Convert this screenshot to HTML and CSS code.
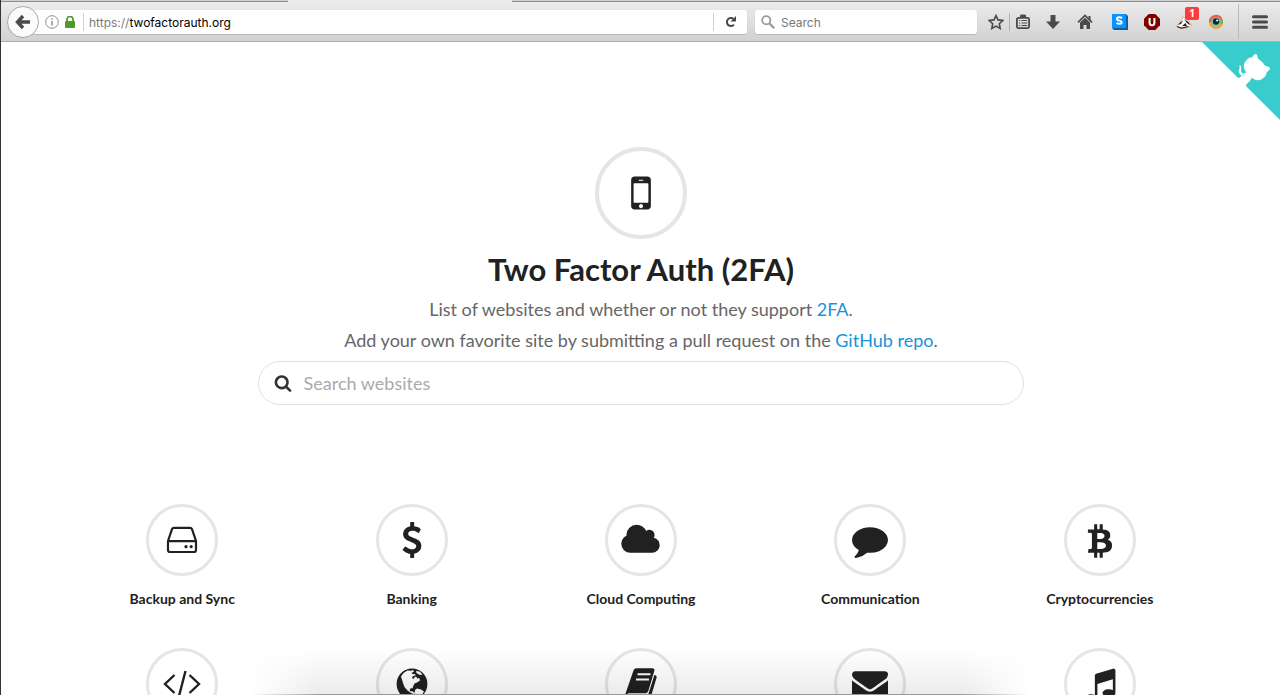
FILE: index.html
```html
<!DOCTYPE html>
<html lang="en">
<head>
<meta charset="utf-8">
<title>Two Factor Auth (2FA)</title>
<link rel="stylesheet" href="styles.css">
</head>
<body>
<div class="browser">
  <div class="tabs"><span class="tab-active"></span></div>
  <div class="toolbar">
    <div class="address">
      <button class="back" aria-label="Back"><svg width="16" height="16" viewBox="0 0 16 16"><path d="M8 2 2.500 8 8 14M3 8h12" fill="none" stroke="#4b4b4b" stroke-width="3.400"/></svg></button>
      <svg class="info" width="14" height="14" viewBox="0 0 14 14"><circle cx="7" cy="7" r="6.300" fill="none" stroke="#909090"/><path d="M7 6v4.600M7 3.200v1.500" stroke="#909090" stroke-width="1.500"/></svg>
      <svg class="lock" width="10" height="12" viewBox="0 0 10 12"><path d="M2 6V3.500a3 3 0 0 1 6 0V6" fill="none" stroke="#4d9a27" stroke-width="1.700"/><rect y="5" width="10" height="7" rx="1" fill="#4d9a27"/></svg>
      <label class="url"><span class="scheme">https://</span><input aria-label="Address" value="twofactorauth.org"></label>
      <button class="reload" aria-label="Reload"><svg width="12" height="12" viewBox="0 0 12 12"><path d="M8.500 3A4 4 0 1 0 9 8.600" fill="none" stroke="#4a4a4a" stroke-width="2"/><path d="M11 0v5.500H5.500z" fill="#4a4a4a"/></svg></button>
    </div>
    <label class="find"><svg width="14" height="14" viewBox="0 0 14 14"><circle cx="5.300" cy="5.300" r="4.100" fill="none" stroke="#999" stroke-width="1.800"/><path d="m8.500 8.500 4.700 4.700" stroke="#999" stroke-width="2.200"/></svg><input aria-label="Search the web" placeholder="Search"></label>
    <div class="actions">
      <button aria-label="Bookmark"><svg width="16" height="16" viewBox="0 0 16 16"><path d="m8 1.600 2 4.300 4.700.6-3.400 3.200.9 4.700L8 12.100l-4.200 2.300.9-4.700L1.300 6.500 6 5.900z" fill="none" stroke="#4a4a4a" stroke-width="1.600"/></svg></button>
      <button class="split" aria-label="Bookmarks list"><svg width="16" height="16" viewBox="0 0 16 16"><rect x="1.900" y="3.900" width="12.200" height="10.200" rx="1.500" fill="none" stroke="#4a4a4a" stroke-width="1.800"/><path d="M5 3V1.800A1.500 1.500 0 0 1 6.500.5h3A1.500 1.500 0 0 1 11 1.800V3z" fill="#4a4a4a"/><path d="M4 6.500h1.200M6.500 6.500h5.700M4 9h1.200M6.500 9h5.700M4 11.500h1.200M6.500 11.500h5.700" stroke="#4a4a4a" stroke-width="1.100"/></svg></button>
      <button aria-label="Downloads"><svg width="16" height="16" viewBox="0 0 16 16"><path d="M5.500 1h5v6.500H15L8 15 1 7.500h4.500z" fill="#4a4a4a"/></svg></button>
      <button aria-label="Home"><svg width="16" height="16" viewBox="0 0 16 16"><path d="M1 8.300 8 1.500l7 6.800" fill="none" stroke="#4a4a4a" stroke-width="1.700"/><path d="M11.500 2h2v4l-2-2zM3 8.600l5-4.800 5 4.800V15H9.500v-4h-3v4H3z" fill="#4a4a4a"/></svg></button>
      <button aria-label="Stylish"><svg width="16" height="16" viewBox="0 0 16 16"><path d="M0 0h14l2 2v14H2l-2-2z" fill="#0861a4"/><path d="M0 0h14v14H0z" fill="#0a93fb"/><path d="M10 4.100C8.300 3 5 2.900 5 4.900c0 2.300 4.700 1.200 4.700 3.300 0 2-3.300 2-5.200.8" fill="none" stroke="#fff" stroke-width="2"/></svg></button>
      <button aria-label="uBlock"><svg width="16" height="16" viewBox="0 0 16 16"><path d="M4.700 0h6.600L16 4.700v6.600L11.300 16H4.700L0 11.300V4.700z" fill="#800000"/><path d="M5.600 4v4.700q0 2.500 2.400 2.500t2.400-2.500V4" fill="none" stroke="#fff" stroke-width="2"/></svg></button>
      <button class="badged" aria-label="Privacy Badger"><svg width="17" height="16" viewBox="0 0 17 16"><path d="M.8 12.500 3 8.500 6.500 5 7 2.500l2 2L13 7l3 4.500-3 1.500-7 1.500z" fill="#fff" stroke="#e8a873" stroke-width=".8"/><path d="m2 11 2.500-3L7 6.500 5 10zM8 5.500l4 2 3 4-3.500-2zM6 12l3.500-3 1.500 3z" fill="#222"/><path d="m1 12.500 4.500 1.600 7-1.600" fill="none" stroke="#222" stroke-width="1.200"/></svg><span class="badge">1</span></button>
      <button class="eye" aria-label="Eye extension"><svg width="16" height="16" viewBox="0 0 16 16"><circle cx="8" cy="8" r="6" fill="#7cc8a2" stroke="#f2a33b" stroke-width="2.200"/><path d="M2 8A6 6 0 0 1 13 4.600" fill="none" stroke="#e95d50" stroke-width="2.200"/><path d="M13 4.600A6 6 0 0 1 13.500 10" fill="none" stroke="#65b55c" stroke-width="2.200"/><circle cx="8" cy="7.500" r="3.200" fill="#102a38"/><circle cx="9.200" cy="6.500" r="1.100" fill="#fff"/></svg></button>
      <button class="menu" aria-label="Menu"><svg width="16" height="14" viewBox="0 0 16 14"><path d="M1.500 1.800h13M1.500 7h13M1.500 12.200h13" stroke="#4a4a4a" stroke-width="3" stroke-linecap="round"/></svg></button>
    </div>
  </div>
</div>

<main class="page">
  <a class="corner" href="#" aria-label="View source on GitHub"><svg width="80" height="80" viewBox="0 0 250 250"><path d="M0,0 L115,115 L130,115 L142,142 L250,250 L250,0 Z" fill="#39cccc"/><path d="M128.3,109.0 C113.8,99.7 119.0,89.6 119.0,89.6 C122.0,82.7 120.5,78.6 120.5,78.6 C119.2,72.0 123.4,76.3 123.4,76.3 C127.3,80.9 125.5,87.3 125.5,87.3 C122.9,97.6 130.6,101.9 134.4,103.2" fill="#fff"/><path d="M115.0,115.0 C114.9,115.1 118.7,116.5 119.8,115.4 L133.7,101.6 C136.9,99.2 139.9,98.4 142.2,98.6 C133.8,88.0 127.5,74.4 143.8,58.0 C148.5,53.4 154.0,51.2 159.7,51.0 C160.3,49.4 163.2,43.6 171.4,40.1 C171.4,40.1 176.1,42.5 178.8,56.2 C183.1,58.6 187.2,61.8 190.9,65.4 C194.5,69.0 197.7,73.2 200.1,77.6 C213.8,80.2 216.3,84.9 216.3,84.9 C212.7,93.1 206.9,96.0 205.4,96.6 C205.1,102.4 203.0,107.8 198.3,112.5 C181.9,128.9 168.3,122.5 157.7,114.1 C157.9,116.9 156.7,120.9 152.7,124.9 L141.0,136.5 C139.8,137.7 141.6,141.9 141.8,141.8 Z" fill="#fff"/></svg></a>

  <header class="hero">
    <div class="ring ring-large"><svg width="46" height="46" viewBox="0 0 1792 1792"><path d="M976 1408q0-33-23.500-56.500t-56.500-23.500-56.500 23.500-23.500 56.500 23.500 56.500 56.500 23.500 56.500-23.500 23.500-56.500zm208-160v-704q0-13-9.500-22.500t-22.500-9.500h-512q-13 0-22.500 9.500t-9.500 22.500v704q0 13 9.500 22.500t22.500 9.500h512q13 0 22.500-9.500t9.500-22.500zm-192-848q0-16-16-16h-160q-16 0-16 16t16 16h160q16 0 16-16zm288-16v1024q0 52-38 90t-90 38h-512q-52 0-90-38t-38-90v-1024q0-52 38-90t90-38h512q52 0 90 38t38 90z"/></svg></div>
    <h1>Two Factor Auth (2FA)</h1>
    <p>List of websites and whether or not they support <a href="#">2FA</a>.</p>
    <p>Add your own favorite site by submitting a pull request on the <a href="#">GitHub repo</a>.</p>
    <label class="search"><svg width="18" height="18" viewBox="0 0 1792 1792"><path d="M1216 832q0-185-131.500-316.500t-316.500-131.500-316.500 131.500-131.500 316.500 131.500 316.500 316.500 131.500 316.500-131.500 131.500-316.500zm512 832q0 52-38 90t-90 38q-54 0-90-38l-343-342q-179 124-399 124-143 0-273.500-55.500t-225-150-150-225-55.500-273.500 55.500-273.500 150-225 225-150 273.500-55.500 273.500 55.500 225 150 150 225 55.500 273.500q0 220-124 399l343 343q37 37 37 90z"/></svg><input aria-label="Search websites" placeholder="Search websites"></label>
  </header>

  <nav class="categories">
    <a class="category" href="#"><span class="ring"><svg width="36" height="36" viewBox="0 0 36 36"><path d="M4 19 8 7.200q.5-1.400 2-1.400h16q1.500 0 2 1.400L32 19v9q0 2-2 2H6q-2 0-2-2zM4.500 19.200h27" fill="none" stroke="#212121" stroke-width="2.200"/><circle cx="22" cy="24.700" r="1.600"/><circle cx="27.200" cy="24.700" r="1.600"/></svg></span>Backup and Sync</a>
    <a class="category" href="#"><span class="ring"><svg width="36" height="36" viewBox="0 0 1792 1792"><path d="M1362 1185q0 153-99.500 263.500t-258.500 136.500v175q0 14-9 23t-23 9h-135q-13 0-22.500-9.500t-9.500-22.500v-175q-66-9-127.500-31t-101.500-44.500-74-48-46.500-37.500-17.500-18q-17-21-2-41l103-135q7-10 23-12 15-2 24 9l2 2q113 99 243 125 37 8 74 8 81 0 142.500-43t61.500-122q0-28-15-53t-33.500-42-58.500-37.500-66-32-80-32.500q-39-16-61.500-25t-61.500-26.500-62.500-31-56.500-35.500-53.500-42.500-43.500-49-35.500-58-21-66.500-8.500-78q0-138 98-242t255-134v-180q0-13 9.500-22.500t22.500-9.500h135q14 0 23 9t9 23v176q57 6 110.500 23t87 33.500 63.500 37.500 39 29 15 14q17 18 5 38l-81 146q-8 15-23 16-14 3-27-7-3-3-14.500-12t-39-26.500-58.500-32-74.500-26-85.500-11.500q-95 0-155 43t-60 111q0 26 8.500 48t29.500 41.500 39.500 33 56 31 60.500 27 70 27.500q53 20 81 31.500t76 35 75.500 42.500 62 50 53 63.500 31.500 76.500 13 94z"/></svg></span>Banking</a>
    <a class="category" href="#"><span class="ring"><svg width="41" height="36" viewBox="0 0 2048 1792"><path d="M1984 1152q0 159-112.500 271.500t-271.500 112.500h-1088q-185 0-316.500-131.500t-131.500-316.500q0-132 71-241.500t187-163.500q-2-28-2-43 0-212 150-362t362-150q158 0 286.500 88t187.500 230q70-62 166-62 106 0 181 75t75 181q0 75-41 138 129 30 213 134.500t84 239.500z"/></svg></span>Cloud Computing</a>
    <a class="category" href="#"><span class="ring"><svg width="36" height="36" viewBox="0 0 1792 1792"><path d="M1792 896q0 174-120 321.500t-326 233-450 85.500q-70 0-145-8-198 175-460 242-49 14-114 22-17 2-30.500-9t-17.500-29v-1q-3-4-.5-12t2-10 4.500-9.500l6-9 7-8.500 8-9q7-8 31-34.500t34.500-38 31-39.500 32.500-51 27-59 26-76q-157-89-247.500-220t-90.500-281q0-130 71-248.500t191-204.500 286-136.500 348-50.500 348 50.500 286 136.500 191 204.500 71 248.500z"/></svg></span>Communication</a>
    <a class="category" href="#"><span class="ring"><svg width="36" height="36" viewBox="-188 84 1792 1792"><path d="M1217 713q18 182-131 258 117 28 175 103t45 214q-7 71-32.500 125t-64.500 89-97 58.500-121.500 34.500-145.500 15v255h-154v-251q-80 0-122-1v252h-154v-255q-18 0-54-.5t-55-.5h-200l31-183h111q50 0 58-51v-402h16q-6-1-16-1v-287q-13-68-89-68h-111v-164l212 1q64 0 97-1v-252h154v247q82-2 122-2v-245h154v252q79 7 140 22.500t113 45 82.500 78 36.500 114.500zm-215 545q0-36-15-64t-37-46-57.500-30.500-65.500-18.500-74-9-69-3-64.500 1-47.500 1v338q8 0 37 .5t48 .5 53-1.500 58.500-4 57-8.500 55.500-14 47.500-21 39.500-30 24.500-40 9.500-51zm-71-476q0-33-12.500-58.500t-30.500-42-48-28-55-16.500-61.500-8-58-2.500-54 1-39.500.5v307q5 0 34.500.5t46.500 0 50-2 55-5.500 51.500-11 48.500-18.500 37-27 27-38.500 9-51z"/></svg></span>Cryptocurrencies</a>
    <a class="category" href="#" aria-label="Developer"><span class="ring"><svg width="38" height="36" viewBox="0 0 38 36"><path d="m11.500 9-9.500 9 9.500 9M26.500 9l9.500 9-9.500 9M22.500 5l-7 27" fill="none" stroke="#212121" stroke-width="2.400"/></svg></span></a>
    <a class="category" href="#" aria-label="Domains"><span class="ring"><svg width="36" height="36" viewBox="0 0 36 36"><circle cx="18" cy="18" r="15.400"/><path d="M7 10.500 9.500 7l4-2.500 3.500.3 2-.8 1 1.500-2.500 1.500 1.500 1.200 2-.2.500 1.500-2.500.5-1 2 1.800 1 1.200-2.500 1.500.5.800 1.500 2-.5.700 2.500-3 2-2.500 1-1.500 3-.5 2-1.500-.5-1.500 2 1 1.500 2-.5.500 1 1.500.5.500 2-4-1.500-3.500-2.500-3-3.500-1.500-4zM21 24l2-1.500 4 1 3 2-1.500 2.500-4 3-2-.3-1.800-3.700z" fill="#fff"/><path d="m22 5 3.500.5 3 3-2.500.5L22.500 7z" fill="#fff"/></svg></span></a>
    <a class="category" href="#" aria-label="Education"><span class="ring"><svg width="36" height="36" viewBox="0 0 36 36"><path d="M10.500 4.500q.7-2.200 3-2.200h16q2.600 0 1.800 2.700l-6 20q-.7 2.200-3 2.200H6q-2 0-2 2 0 1.500 2 1.500h18.500l7-22 1.500 1q1 .7.500 2.200l-6 20q-.7 2-3 2H5.500Q2 34 2 29z"/><path d="M14.500 8.300h13M13 13.500h13" stroke="#fff" stroke-width="2"/></svg></span></a>
    <a class="category" href="#" aria-label="Email"><span class="ring"><svg width="36" height="36" viewBox="0 0 1792 1792"><path d="M1792 710v794q0 66-47 113t-113 47h-1472q-66 0-113-47t-47-113v-794q44 49 101 87 362 246 497 345 57 42 92.500 65.500t94.500 48 110 24.500h2q51 0 110-24.500t94.500-48 92.500-65.500q170-123 498-345 57-39 100-87zm0-294q0 79-49 151t-122 123q-376 261-468 325-10 7-42.500 31t-54 38.500-52 32.500-57.500 27-50 9h-2q-23 0-50-9t-57.500-27-52-32.500-54-38.500-42.500-31q-91-64-262-182.500t-205-142.500q-62-42-117-115.500t-55-136.500q0-78 41.500-130t118.500-52h1472q65 0 112.500 47t47.500 113z"/></svg></span></a>
    <a class="category" href="#" aria-label="Entertainment"><span class="ring"><svg width="36" height="36" viewBox="0 0 1792 1792"><path d="M1664 224v1120q0 50-34 89t-86 60.500-103.500 32-96.500 10.500-96.500-10.500-103.500-32-86-60.500-34-89 34-89 86-60.500 103.500-32 96.500-10.500q105 0 192 39v-537l-768 237v709q0 50-34 89t-86 60.500-103.500 32-96.500 10.500-96.500-10.500-103.500-32-86-60.500-34-89 34-89 86-60.500 103.500-32 96.500-10.500q105 0 192 39v-967q0-31 19-56.500t49-35.500l832-256q12-4 28-4 40 0 68 28t28 68z"/></svg></span></a>
  </nav>
  <div class="shade"></div>
</main>
</body>
</html>
```
FILE: styles.css
```css
* { box-sizing: border-box; }
body {
  margin: 0;
  height: 100vh;
  overflow: hidden;
  display: flex;
  flex-direction: column;
  border-left: 1px solid #333;
  background: #fff;
  color: #212121;
  font-family: Lato, sans-serif;
}
button { border: 0; padding: 0; background: none; display: flex; align-items: center; justify-content: center; }
input { border: 0; padding: 0; outline: 0; background: none; min-width: 0; }
svg { display: block; flex: none; }
a { color: #1593dc; text-decoration: none; }

.browser { flex: none; font-family: Inter, sans-serif; border-bottom: 1px solid #adadad; }
.tabs { height: 2px; background: #cfcfcf; border-bottom: 1px solid #8c8c8c; display: flex; }
.tab-active { width: 224px; margin-left: 287px; height: 2px; background: #ececec; }
.toolbar {
  height: 39px;
  display: flex;
  align-items: center;
  padding-left: 6px;
  background: linear-gradient(#ebebeb, #d2d2d2);
}
.address {
  flex: 1;
  height: 24px;
  display: flex;
  align-items: center;
  background: #fff;
  border-radius: 16px 3px 3px 16px;
  box-shadow: 0 1px 1px #bbb;
}
.back { width: 32px; height: 32px; border: 1px solid #a8a8a8; border-radius: 50%; background: #fbfbfb; flex: none; }
.info { margin-left: 6px; }
.lock { margin: 0 8px 0 6px; }
.url {
  flex: 1;
  height: 18px;
  display: flex;
  align-items: center;
  padding: 2px 0 0 5px;
  border-left: 1px solid #d0d0d0;
  border-right: 1px solid #d0d0d0;
  font-size: 12px;
}
.url input { flex: 1; font: inherit; color: #000; }
.scheme { color: #7b7b7b; }
.reload { width: 33px; height: 24px; }
.find {
  width: 222px;
  height: 24px;
  margin-left: 8px;
  padding-left: 6px;
  display: flex;
  align-items: center;
  gap: 6px;
  background: #fff;
  border-radius: 3px;
  box-shadow: 0 1px 1px #bbb;
}
.find input { flex: 1; padding-top: 2px; font: 12px Inter, sans-serif; }
.find input::placeholder { color: #777; opacity: 1; }
.actions { display: flex; align-items: center; gap: 16px; margin-left: 11px; }
.split { position: relative; margin-left: -5px; }
.split::before { content: ""; position: absolute; left: -6px; height: 18px; border-left: 1px solid #b0b0b0; }
.split + button { margin-left: -2px; }
.split ~ button:nth-of-type(5) { margin-left: 3px; }
.badged { position: relative; }
.badge {
  position: absolute;
  left: 9px;
  top: -7px;
  width: 14px;
  height: 13px;
  border-radius: 2px;
  background: #fb3c3c;
  color: #fff;
  font: bold 10px/13px "Open Sans", sans-serif;
}
.eye { margin-left: -1px; }
.menu { width: 42px; height: 35px; margin-left: -2px; border-left: 1px solid #bababa; }

.page { position: relative; flex: 1; min-height: 0; overflow: hidden; padding-left: 1px; }
.corner { position: absolute; top: -1px; right: -1px; }
.hero {
  width: 60%;
  margin: 0 auto;
  padding-top: 105px;
  display: flex;
  flex-direction: column;
  align-items: center;
}
.ring {
  width: 72px;
  height: 72px;
  border: 3px solid #e5e5e5;
  border-radius: 50%;
  background: #fff;
  display: flex;
  align-items: center;
  justify-content: center;
  fill: #212121;
}
.ring-large { width: 92px; height: 92px; border-width: 4px; }
h1 { margin: 9px 0 4px; font-size: 31px; line-height: 42px; font-weight: 700; white-space: nowrap; }
.hero p { margin: 0; font-size: 18px; line-height: 31px; color: #666; white-space: nowrap; }
.search {
  width: 100%;
  height: 44px;
  margin-top: 5px;
  padding-left: 15px;
  display: flex;
  align-items: center;
  gap: 12px;
  border: 1px solid #dfdfdf;
  border-radius: 22px;
  fill: #333;
}
.search input { flex: 1; font: 18px Lato, sans-serif; }
.search input::placeholder { color: #aaa; opacity: 1; }
.categories {
  width: 1147px;
  max-width: 100%;
  margin: 99px auto 0;
  display: grid;
  grid-template-columns: repeat(5, 1fr);
  row-gap: 39px;
}
.category {
  display: flex;
  flex-direction: column;
  align-items: center;
  gap: 13px;
  color: #212121;
  font-size: 14px;
  line-height: 20px;
  font-weight: 700;
}
.shade {
  position: absolute;
  left: 250px;
  right: 250px;
  bottom: 0;
  height: 46px;
  border-bottom: 1px solid #999;
  background: linear-gradient(transparent, rgba(0, 0, 0, .08));
  mask-image: linear-gradient(90deg, transparent, #000 70px, #000 calc(100% - 70px), transparent);
}
```
